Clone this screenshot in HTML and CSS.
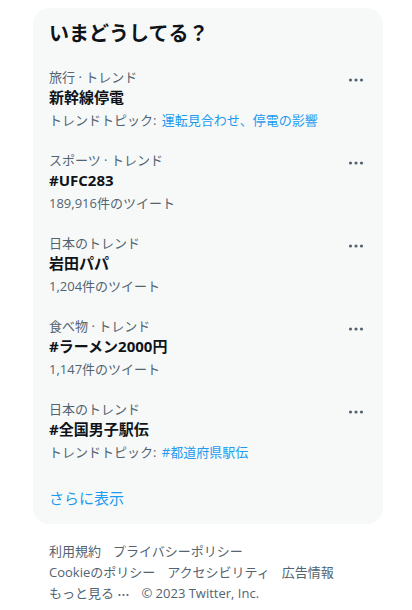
FILE: index.html
```html
<!DOCTYPE html>
<html lang="ja">
<head>
<meta charset="utf-8">
<link rel="stylesheet" href="styles.css">
</head>
<body>
<div class="page">
  <section class="card">
    <h2 class="title">いまどうしてる？</h2>

    <div class="trend">
      <div class="cat">旅行 · トレンド</div>
      <div class="name">新幹線停電</div>
      <div class="meta">トレンドトピック: <span class="link">運転見合わせ、停電の影響</span></div>
      <svg class="more" width="18" height="18" viewBox="0 0 18 18"><circle cx="3.5" cy="9" r="1.6"/><circle cx="9" cy="9" r="1.6"/><circle cx="14.5" cy="9" r="1.6"/></svg>
    </div>

    <div class="trend">
      <div class="cat">スポーツ · トレンド</div>
      <div class="name">#UFC283</div>
      <div class="meta">189,916件のツイート</div>
      <svg class="more" width="18" height="18" viewBox="0 0 18 18"><circle cx="3.5" cy="9" r="1.6"/><circle cx="9" cy="9" r="1.6"/><circle cx="14.5" cy="9" r="1.6"/></svg>
    </div>

    <div class="trend">
      <div class="cat">日本のトレンド</div>
      <div class="name">岩田パパ</div>
      <div class="meta">1,204件のツイート</div>
      <svg class="more" width="18" height="18" viewBox="0 0 18 18"><circle cx="3.5" cy="9" r="1.6"/><circle cx="9" cy="9" r="1.6"/><circle cx="14.5" cy="9" r="1.6"/></svg>
    </div>

    <div class="trend">
      <div class="cat">食べ物 · トレンド</div>
      <div class="name">#ラーメン2000円</div>
      <div class="meta">1,147件のツイート</div>
      <svg class="more" width="18" height="18" viewBox="0 0 18 18"><circle cx="3.5" cy="9" r="1.6"/><circle cx="9" cy="9" r="1.6"/><circle cx="14.5" cy="9" r="1.6"/></svg>
    </div>

    <div class="trend">
      <div class="cat">日本のトレンド</div>
      <div class="name">#全国男子駅伝</div>
      <div class="meta">トレンドトピック: <span class="link">#都道府県駅伝</span></div>
      <svg class="more" width="18" height="18" viewBox="0 0 18 18"><circle cx="3.5" cy="9" r="1.6"/><circle cx="9" cy="9" r="1.6"/><circle cx="14.5" cy="9" r="1.6"/></svg>
    </div>

    <div class="showmore">さらに表示</div>
  </section>

  <nav class="footer">
    <span class="flink">利用規約</span>
    <span class="flink">プライバシーポリシー</span>
    <span class="flink">Cookieのポリシー</span>
    <span class="flink">アクセシビリティ</span>
    <span class="flink">広告情報</span>
    <span class="flink">もっと見る <svg class="fdots" width="11" height="6" viewBox="0 0 11 6"><circle cx="1.5" cy="3" r="1.1"/><circle cx="5.5" cy="3" r="1.1"/><circle cx="9.5" cy="3" r="1.1"/></svg></span>
    <span class="flink">© 2023 Twitter, Inc.</span>
  </nav>
  <div class="next"></div>
</div>
</body>
</html>
```

FILE: styles.css
```css
* { box-sizing: border-box; }
html, body { margin: 0; padding: 0; background: #ffffff; }
body {
  font-family: "Open Sans", "Noto Sans CJK JP", sans-serif;
  color: #0f1419;
}
.page {
  width: 350px;
  margin-left: 33px;
  padding-top: 8px;
}
.card {
  background: #f7f9f9;
  border-radius: 16px;
  overflow: hidden;
}
.title {
  margin: 0;
  padding: 13px 16px 12px;
  font-size: 20px;
  line-height: 24px;
  font-weight: 700;
  font-family: "Noto Sans CJK JP", sans-serif;
  color: #0f1419;
}
.trend {
  position: relative;
  padding: 12px 16px;
  display: flex;
  flex-direction: column;
}
.cat {
  font-size: 13px;
  line-height: 16px;
  color: #536471;
}
.name {
  margin-top: 2px;
  font-size: 15px;
  line-height: 20px;
  font-weight: 700;
  color: #0f1419;
}
.meta {
  margin-top: 5px;
  font-size: 13px;
  line-height: 16px;
  color: #536471;
}
.link { color: #1d9bf0; margin-left: 2px; }
.more {
  position: absolute;
  right: 18px;
  top: 14px;
  fill: #536471;
}
.showmore {
  padding: 16px;
  font-size: 15px;
  line-height: 20px;
  color: #1d9bf0;
}
.footer {
  padding: 17px 16px 0;
  display: flex;
  flex-wrap: wrap;
  font-size: 13px;
  line-height: 17px;
  color: #536471;
}
.flink { margin: 2px 12px 2px 0; white-space: nowrap; }
.fdots { fill: #536471; vertical-align: middle; margin-left: 1px; }
.next {
  margin-top: 12px;
  height: 20px;
  background: #f7f9f9;
  border-radius: 16px 16px 0 0;
}
```
